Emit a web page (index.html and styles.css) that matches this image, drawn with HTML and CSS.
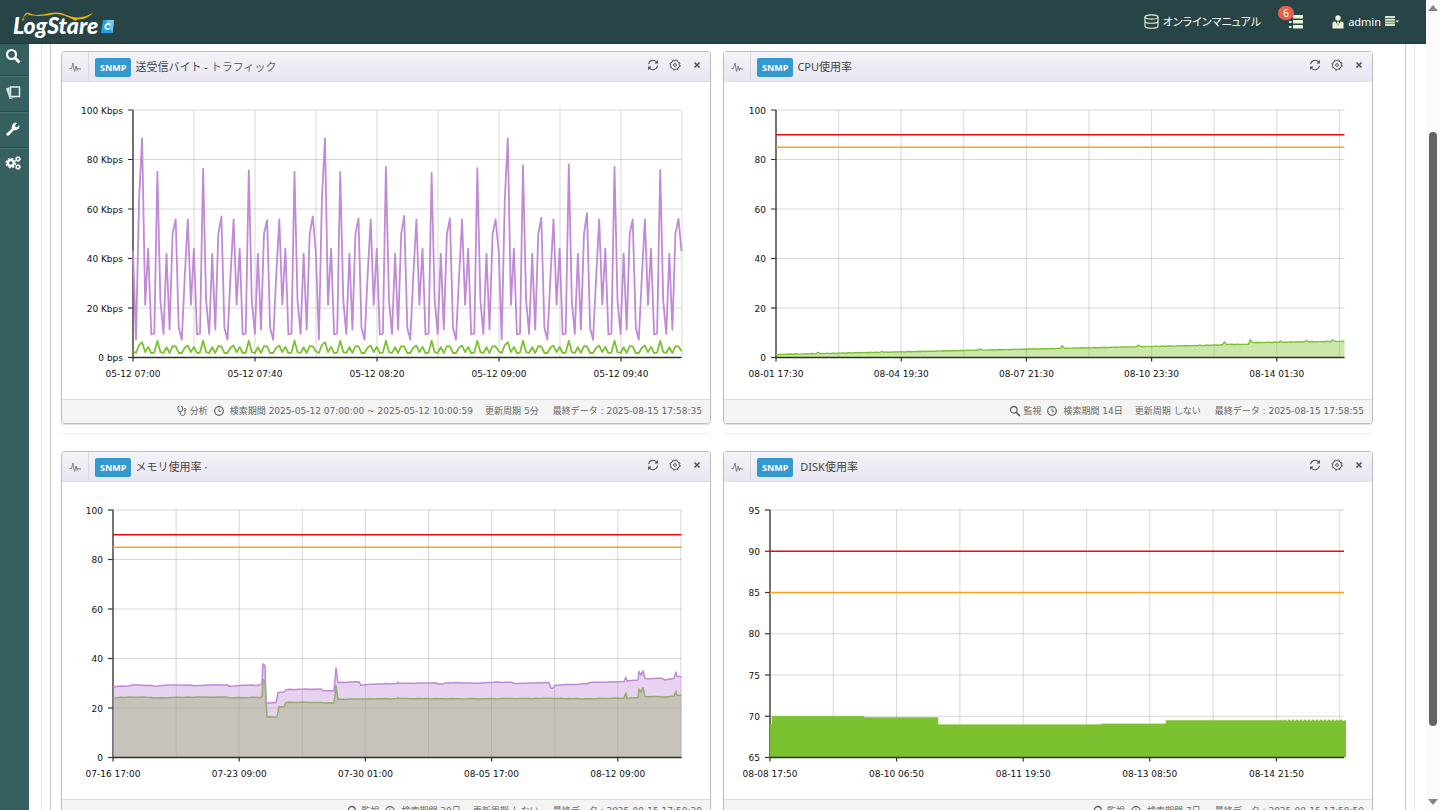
FILE: index.html
```html
<!DOCTYPE html>
<html lang="ja">
<head>
<meta charset="utf-8">
<title>LogStare</title>
<link rel="stylesheet" href="styles.css">
</head>
<body>
<svg class="sprite" aria-hidden="true">
  <symbol id="i-pulse" viewBox="0 0 12 12"><path d="M.5 7.500h2L4 2l1.500 8.500L7.200 5l1 4.500.9-2.500.6 1H12" fill="none" stroke="currentColor" stroke-width=".9"/></symbol>
  <symbol id="i-refresh" viewBox="0 0 12 12"><path d="M1.600 5.200A4.500 4.500 0 0 1 9.600 3M10.400 6.800A4.500 4.500 0 0 1 2.400 9" fill="none" stroke="currentColor" stroke-width="1.100"/><path d="M11 1v3.600H7.400zM1 11V7.400h3.600z" fill="currentColor"/></symbol>
  <symbol id="i-gear" viewBox="0 0 12 12"><circle cx="6" cy="6" r="4.400" fill="none" stroke="currentColor" stroke-width=".9"/><circle cx="6" cy="6" r="5.200" fill="none" stroke="currentColor" stroke-width=".9" stroke-dasharray="2.100 1.980"/><circle cx="6" cy="6" r="1.400" fill="none" stroke="currentColor" stroke-width=".9"/></symbol>
  <symbol id="i-close" viewBox="0 0 12 12"><path d="M3.500 3.500l5 5M8.500 3.500l-5 5" stroke="currentColor" stroke-width="1.600"/></symbol>
  <symbol id="i-clock" viewBox="0 0 12 12"><circle cx="6" cy="6" r="4.300" fill="none" stroke="currentColor" stroke-width="1.200"/><path d="M6 3.500V6.300h2.200" fill="none" stroke="currentColor"/></symbol>
  <symbol id="i-search" viewBox="0 0 12 12"><circle cx="4.800" cy="4.800" r="3.300" fill="none" stroke="currentColor" stroke-width="1.300"/><path d="M7.300 7.300l3.700 3.700" stroke="currentColor" stroke-width="1.700"/></symbol>
  <symbol id="i-steth" viewBox="0 0 12 12"><path d="M3.500 1.500H2v3a2 2 0 0 0 4.400 0v-3H5M4.200 6.600v1.600c0 3 4.800 3 4.800 0V5.500" fill="none" stroke="currentColor" stroke-width="1"/><circle cx="9" cy="4.500" r="1.100" fill="none" stroke="currentColor" stroke-width=".9"/></symbol>
</svg>
<div class="window">
  <div class="page">
    <header class="topbar">
      <a class="logo" href="#" aria-label="LogStare">
        <svg class="cat" viewBox="0 0 76 12" aria-hidden="true"><path d="M1 10C3 3 5 1 8 2c4 2 8 2.500 14 1.500S35 0 42 2.500s10 4 16 4S69 4 73 1.500C69 7 63 8.500 57 8.500L55 10l-3-2C44 4.500 39 2 32 3.500S14 5.500 9 4L6 4.500 4.500 8z" fill="#f2b500"/><path d="M2 7l4-4 3 1-4 2-1 3z" fill="#284447"/></svg>
        <span class="brand">LogStare</span>
        <svg class="edition" viewBox="0 0 13 13" aria-hidden="true"><path d="M2 0h11l-1.500 13H0z" fill="#1ba5e0"/><path d="M5 0h8l-1.500 13z" fill="#79c8ec"/><path d="M9 4.500C6.500 3 4.500 4.500 4.300 6.600S6 9.700 8.500 8.500" fill="none" stroke="#fff" stroke-width="1.800"/></svg>
      </a>
      <nav class="tools">
        <a class="manual" href="#"><svg class="db" viewBox="0 0 15 15" aria-hidden="true"><g fill="none" stroke="#dde9cf" stroke-width="1.200"><ellipse cx="7.500" cy="3" rx="6.500" ry="2.200"/><path d="M1 3v9c0 3 13 3 13 0V3M1 7c0 3 13 3 13 0"/></g></svg>オンラインマニュアル</a>
        <button class="tasks" aria-label="通知 6件"><svg class="list" viewBox="0 0 15 15" aria-hidden="true"><path d="M5 1h10v3.500H5zM5 6h10v3.500H5zM5 11h10v3.500H5z" fill="#eef5d6"/><path d="M1 2h2.500v2H1zM1 7h2.500v2H1zM1 12h2.500v2H1z" fill="#eef5d6"/></svg><span class="badge">6</span></button>
        <button class="user"><svg class="person" viewBox="0 0 12 14" aria-hidden="true"><circle cx="6" cy="3" r="2.700" fill="#eef5d6"/><path d="M.5 13.500V8c0-1.500 2-1.500 3-1.500L6 11l2.500-4.500c1 0 3 0 3 1.500v5.500zM5.300 6.500h1.400L7 8.500l-1 2-1-2z" fill="#eef5d6"/></svg><span>admin</span><svg class="caret" viewBox="0 0 14 11" aria-hidden="true"><path d="M0 0h10v2H0zM0 2.700h10v2H0zM0 5.400h10v2H0zM0 8.100h10v2H0z" fill="#d7e4c8"/><path d="M10.500 4.500H14L12.250 6.500z" fill="#fff"/></svg></button>
      </nav>
    </header>
    <div class="body">
      <nav class="sidebar">
        <button aria-label="検索"><svg viewBox="0 0 16 16" aria-hidden="true"><circle cx="6.500" cy="6.500" r="4.500" fill="none" stroke="#fff" stroke-width="2.200"/><path d="M9.800 9.800l4.700 4.700" stroke="#fff" stroke-width="2.800"/></svg></button>
        <button aria-label="レポート"><svg viewBox="0 0 16 16" aria-hidden="true"><path d="M5.500 2h9v9.500h-9z" fill="none" stroke="#e6f2f0" stroke-width="1.400"/><path d="M4.500 2L1 3.500 4.500 14l6-1.500H4.800z" fill="#d8e8e6"/></svg></button>
        <button aria-label="設定"><svg viewBox="0 0 16 16" aria-hidden="true"><path d="M1.500 12.500L7 7.500C6 4 9 .8 12.300 2L10 4.300l.5 1.700 1.800.3L14.300 4C15 7.500 12 10 9 9l-5 5.300c-1.500 1.200-3.600-.6-2.500-1.800z" fill="#fff"/></svg></button>
        <button aria-label="システム"><svg viewBox="0 0 16 16" aria-hidden="true"><g fill="none" stroke="#fff"><circle cx="5.800" cy="8" r="3" stroke-width="2.400"/><circle cx="5.800" cy="8" r="4.700" stroke-width="1.400" stroke-dasharray="2 1.700"/><circle cx="13" cy="4" r="1.700" stroke-width="1.300"/><circle cx="13" cy="4" r="2.600" stroke-width=".8" stroke-dasharray="1.200 .9"/><circle cx="13" cy="12" r="1.700" stroke-width="1.300"/><circle cx="13" cy="12" r="2.600" stroke-width=".8" stroke-dasharray="1.200 .9"/></g></svg></button>
      </nav>
      <main class="content">
        <div class="outer"><div class="inner">
          <div class="grid" id="grid"></div>
        </div></div>
      </main>
    </div>
  </div>
  <div class="scrollbar" aria-hidden="true"><span class="arrow up"></span><span class="track"><span class="thumb"></span></span><span class="arrow down"></span></div>
</div>
<script src="charts.js"></script>
</body>
</html>
```

FILE: styles.css
```css
* { box-sizing: border-box; }
body { margin: 0; background: #fff; color: #444; font: 10px/14px "DejaVu Sans", "Noto Sans CJK JP", sans-serif; }
button { border: 0; padding: 0; background: none; color: inherit; font: inherit; cursor: pointer; }
a { color: inherit; text-decoration: none; }
.sprite { display: none; }
.window { display: grid; grid-template-columns: 1fr 14px; height: 100vh; overflow: hidden; }
.page { display: flex; flex-direction: column; min-width: 0; overflow: hidden; }

.topbar { display: flex; flex: none; justify-content: space-between; height: 44px; padding: 0 27px 0 13px; background: #284447; border-bottom: 1px solid #1e383b; color: #fff; }
.logo { position: relative; display: flex; gap: 3px; align-items: flex-end; padding-bottom: 8px; }
.brand { font: italic 900 23px/20px Lato, sans-serif; }
.cat { position: absolute; left: 8px; top: 11px; width: 75px; height: 12px; }
.edition { width: 13px; height: 13px; margin-bottom: 2px; }
.tools { display: flex; align-items: center; font: 11px/16px "Noto Sans", "Noto Sans CJK JP", sans-serif; }
.manual { display: flex; align-items: center; gap: 4px; font-feature-settings: "palt"; }
.db { width: 15px; height: 15px; }
.tasks { position: relative; margin-left: 27px; display: flex; }
.list { width: 15px; height: 15px; }
.badge { position: absolute; right: 9px; top: -8px; width: 16px; height: 14px; border-radius: 7px; background: #e8624a; color: #fff; font: 10px/14px "Noto Sans", sans-serif; text-align: center; }
.user { display: flex; align-items: center; gap: 4px; margin-left: 29px; }
.person { width: 12px; height: 14px; }
.caret { width: 14px; height: 11px; }

.body { display: flex; flex: 1; min-height: 0; }
.sidebar { flex: none; width: 29px; background: #365f60; }
.sidebar button { display: flex; align-items: center; width: 29px; height: 36px; padding: 0 0 2px 5px; border-top: 1px solid #4a7475; border-bottom: 1px solid #264a4c; }
.sidebar button:first-child { height: 32px; padding-bottom: 8px; border-top: 0; }
.sidebar button:last-child { border-bottom: 0; padding-bottom: 7px; }
.sidebar svg { width: 16px; height: 16px; }
.content { flex: 1; min-width: 0; padding: 0 11px 0 12px; }
.outer { height: 100%; padding: 0 8px; border: solid #e6e6e6; border-width: 0 1px; }
.inner { height: 100%; padding: 7px 32px 0 10px; border: solid #c8c8c8; border-width: 0 1px; }
.grid { display: grid; grid-template-columns: 1fr 1fr; gap: 17px 12px; }
.slot { min-width: 0; padding-bottom: 9px; border-bottom: 1px solid #ececec; border-radius: 4px; }
.panel { border: 1px solid #bcbcbc; border-radius: 4px; overflow: hidden; box-shadow: 0 1px 1px #ddd; }
.panel-head { display: flex; align-items: center; height: 30px; padding-right: 5px; background: linear-gradient(#f4f3f9, #e8e6f1); border-bottom: 1px solid #dcdce2; }
.panel-mark { display: flex; align-items: center; justify-content: center; width: 27px; height: 29px; border-right: 1px solid #d8d8de; color: #777; }
.panel-mark svg { width: 12px; height: 12px; }
.tag { margin: 2px 4px 0 6px; height: 19px; padding: 0 5px; border-radius: 2px; background: #3399cf; color: #fff; font: bold 9px/19px "Open Sans", sans-serif; }
.panel-title { flex: 1; margin: 0; color: #444; font: 11px/16px "Noto Sans", "Noto Sans CJK JP", sans-serif; white-space: pre; }
.panel-title .sub { color: #666; }
.panel-tools { display: flex; gap: 6px; padding-bottom: 3px; color: #555; }
.panel-tools button { display: flex; align-items: center; justify-content: center; width: 16px; height: 16px; }
.panel-tools svg { width: 12px; height: 12px; }
.chart { display: block; width: 100%; height: auto; font: 9px "DejaVu Sans", sans-serif; fill: #111; }
.panel-foot { display: flex; align-items: center; justify-content: flex-end; height: 24px; padding: 0 8px 1px; background: #f4f4f4; border-top: 1px solid #dedede; color: #666; font-size: 9px; white-space: pre; }
.panel-foot svg { width: 12px; height: 12px; margin-right: 2px; }
.panel-foot span { display: flex; align-items: center; }
.panel-foot .period { margin-left: 5px; }
.panel-foot .period svg { margin-right: 5px; }
.panel-foot .cycle { margin-left: 12px; }
.panel-foot .last { margin-left: 14px; }

.scrollbar { display: flex; flex-direction: column; align-items: center; padding: 5px 0; background: #fbfbfb; }
.arrow { border: 5px solid transparent; }
.up { border-top: 0; border-bottom: 6px solid #858585; }
.down { border-bottom: 0; border-top: 6px solid #858585; }
.track { flex: 1; width: 8px; padding-top: 121px; }
.thumb { display: block; height: 89%; border-radius: 4px; background: #636363; }
```

FILE: charts.js
```js
const PURPLE = '#c08ad6', GREEN = '#7cc230';
const range = (a, b, n) => Array.from({ length: n }, (_, i) => a + (b - a) * i / (n - 1));
const noise = i => Math.sin(i * 2.3) * 0.5 + Math.sin(i * 5.1) * 0.5;

function traffic() {
  const cycle = [75, 23, 9.5, 42, 11.3, 50, 56, 12, 7.2, 33, 55.8, 21.3, 44, 9.3, 9.7];
  const peaks = [75, 76.3, 75.6, 75, 75, 77, 74.6, 76.5, 77.7, 78, 77, 75.8];
  const crest = [55.8, 57, 55.5, 57, 56.2, 57.2, 56.2, 55.8, 56.5, 58.3, 55.8, 56];
  const small = [6.8, 2.2, 1.8, 4.2, 1.8, 4.6, 4.5, 1.8, 1.8, 3.9, 4.8, 2.2, 4.3, 1.8, 2];
  const hour = [43, 7.3, 64, 88.5], hourSmall = [2.5, 1.8, 5, 6.2];
  const up = [], down = [];
  for (let m = 0; m <= 180; m++) {
    const k = (m + 7) % 15, n = Math.floor((m - 8) / 15), h = m % 60;
    let v = k === 0 ? peaks[n] : k === 6 ? crest[n] : cycle[k], s = small[k];
    if (h < 4) { v = hour[h]; s = hourSmall[h]; }
    up.push([m / 180, v]);
    down.push([m / 180, s]);
  }
  return [{ pts: up, color: PURPLE, width: 1.8 }, { pts: down, color: GREEN, width: 1.8 }];
}

function cpu() {
  const bumps = { 42: .5, 106: .4, 205: .6, 286: 1.1, 362: .7, 448: 1.3, 475: 1.2, 505: .4, 530: .5, 556: .6 };
  const pts = range(0, 568, 285).map(x => {
    let v = x < 450 ? 1.2 + x * .0087 : x < 474 ? 5.3 : 6 + (x - 474) * .006;
    return [x / 568, v + noise(x) * .12 + (bumps[x] || bumps[x + 1] || 0)];
  });
  return [{ pts, color: GREEN, width: 1.4, fill: .4 }];
}

function memory() {
  const series = list => list.map(([x, v]) => [(x - 113) / 568.5, v]);
  const wiggle = list => {
    const out = [];
    list.forEach(([x, v], i) => {
      out.push([x, v]);
      const next = list[i + 1];
      if (next && next[0] - x > 9) for (let p = x + 4; p < next[0] - 3; p += 4)
        out.push([p, v + (next[1] - v) * (p - x) / (next[0] - x) + noise(p) * .12]);
    });
    return series(out);
  };
  const top = [[113, 28.7], [129, 28.9], [132, 29.3], [151, 29.2], [154, 28.8], [166, 29.2], [189, 29.3], [194, 29], [208, 29.3], [227, 29.3], [230, 28.8], [240, 29.1], [260, 29.3], [262, 30], [263, 37.8], [265, 37], [266, 22], [276, 22.2], [277, 24], [278, 26.3], [284, 26.5], [286, 27.4], [302, 27.6], [321, 27.7], [323, 27], [334, 27], [336, 36.2], [338, 30.3], [350, 30.5], [359, 30.6], [361, 29.2], [370, 29.6], [397, 29.9], [398, 30.5], [399, 29.9], [436, 30.2], [438, 29.7], [455, 30.3], [476, 30], [494, 30.4], [512, 30.4], [514, 29.9], [549, 30.3], [551, 28], [553, 28], [555, 29.2], [587, 29.8], [590, 30.3], [624, 30.7], [626, 32.5], [627, 30.9], [638, 31.3], [639, 34.8], [641, 33.2], [643, 35], [645, 31.9], [662, 32], [665, 31.3], [674, 32], [676, 34.5], [677, 32.8], [681.5, 32.6]];
  const low = [[113, 24.1], [130, 24.4], [151, 24.3], [154, 24], [189, 24.4], [227, 24.4], [230, 24.1], [260, 24.3], [262, 24.5], [263, 31.5], [265, 31], [267, 16.4], [277, 16.4], [279, 20.6], [284, 20.4], [286, 22.2], [302, 22.3], [321, 22.2], [334, 22], [336, 29], [338, 23.5], [350, 23.6], [397, 23.8], [398, 24.2], [399, 23.8], [476, 23.7], [549, 23.9], [587, 23.7], [624, 24], [626, 26], [627, 23.9], [638, 24.2], [639, 27.8], [641, 26.4], [643, 28.2], [645, 24.7], [665, 24.5], [674, 24.8], [676, 26.8], [677, 25], [681.5, 25]];
  return [{ pts: wiggle(low), color: GREEN, width: 1.5, fill: .4 }, { pts: wiggle(top), color: PURPLE, width: 1.5, fill: .38 }];
}

function disk() {
  const pts = [];
  [[770, 772, 69], [772, 864, 70], [864, 938, 69.85], [938, 1101, 68.97], [1101, 1166, 69.07], [1166, 1285, 69.5]]
    .forEach(([a, b, v]) => pts.push([(a - 770) / 574, v], [(b - 770) / 574, v]));
  for (let x = 1285; x < 1345; x += 2) pts.push([(x - 770) / 574, x % 4 === 1 ? 69.6 : 69.4]);
  pts.push([576 / 574, 69.5]);
  return [{ pts, color: GREEN, width: .6, fill: 1 }];
}

const limits = [[90, '#f80808'], [85, '#ffa01a']];
const panels = [
  { title: '送受信バイト - <span class="sub">トラフィック</span>', icon: 'steth', mode: '分析', period: '検索期間 2025-05-12 07:00:00 ~ 2025-05-12 10:00:59', cycle: '更新周期 5分', last: '2025-08-15 17:58:35',
    x0: 71, x1: 619.5, step: 61, min: 0, max: 100, tick: 20, unit: v => v ? v + ' Kbps' : '0 bps', dates: ['05-12 07:00', '05-12 07:40', '05-12 08:20', '05-12 09:00', '05-12 09:40'], data: traffic(), limits: [] },
  { title: 'CPU使用率', icon: 'search', mode: '監視', period: '検索期間 14日', cycle: '更新周期 しない', last: '2025-08-15 17:58:55',
    x0: 52, x1: 620.5, step: 62.6, min: 0, max: 100, tick: 20, unit: v => v, dates: ['08-01 17:30', '08-04 19:30', '08-07 21:30', '08-10 23:30', '08-14 01:30'], data: cpu(), limits },
  { title: 'メモリ使用率 ·', icon: 'search', mode: '監視', period: '検索期間 30日', cycle: '更新周期 しない', last: '2025-08-15 17:58:20',
    x0: 51, x1: 619.5, step: 63.1, min: 0, max: 100, tick: 20, unit: v => v, dates: ['07-16 17:00', '07-23 09:00', '07-30 01:00', '08-05 17:00', '08-12 09:00'], data: memory(), limits },
  { title: ' DISK使用率', icon: 'search', mode: '監視', period: '検索期間 7日', cycle: '', last: '2025-08-15 17:58:50',
    x0: 46, x1: 620, step: 63.3, min: 65, max: 95, tick: 5, unit: v => v, dates: ['08-08 17:50', '08-10 06:50', '08-11 19:50', '08-13 08:50', '08-14 21:50'], data: disk(), limits }
];

function draw(p) {
  const top = 28, bottom = 275.5;
  const X = t => p.x0 + t * (p.x1 - p.x0);
  const Y = v => bottom - (v - p.min) / (p.max - p.min) * (bottom - top);
  const line = (x1, y1, x2, y2, c, w) => `<line x1="${x1}" y1="${y1}" x2="${x2}" y2="${y2}" stroke="${c}" stroke-width="${w}"/>`;
  let s = '';
  for (let i = 1; p.x0 + i * p.step <= p.x1 + 1; i++) s += line(p.x0 + i * p.step, top, p.x0 + i * p.step, bottom, '#000', 1).replace('/>', ' opacity=".15"/>');
  for (let v = p.min; v <= p.max; v += p.tick) {
    const y = Y(v);
    s += line(p.x0, y, p.x1, y, '#000', 1).replace('/>', ' opacity=".15"/>');
    s += line(p.x0 - 5, y, p.x0, y, '#333', 1.2);
    s += `<text x="${p.x0 - 10}" y="${y + 3.5}" text-anchor="end">${p.unit(v)}</text>`;
  }
  s += line(p.x0, top, p.x0, bottom, '#444', 1.5);
  p.data.forEach(d => {
    const pts = d.pts.map(([t, v]) => X(t).toFixed(1) + ',' + Y(v).toFixed(1)).join(' ');
    const end = X(d.pts[d.pts.length - 1][0]);
    if (d.fill) s += `<polygon points="${p.x0},${bottom} ${pts} ${end},${bottom}" fill="${d.color}" fill-opacity="${d.fill}"/>`;
    s += `<polyline points="${pts}" fill="none" stroke="${d.color}" stroke-width="${d.width}" stroke-linejoin="round"/>`;
  });
  p.limits.forEach(([v, c]) => { s += line(p.x0, Y(v), p.x1, Y(v), c, 1.5); });
  s += line(p.x0, bottom, p.x1, bottom, '#2b3320', 1.3);
  p.dates.forEach((d, i) => {
    const x = p.x0 + i * p.step * 2;
    s += line(x, bottom, x, bottom + 4, '#333', 1.2) + `<text x="${x}" y="295" text-anchor="middle">${d}</text>`;
  });
  return `<svg class="chart" viewBox="0 0 648 317" role="img">${s}</svg>`;
}

const icon = n => `<svg aria-hidden="true"><use href="#i-${n}"/></svg>`;
document.getElementById('grid').innerHTML = panels.map(p => `
<div class="slot"><section class="panel">
<header class="panel-head"><span class="panel-mark">${icon('pulse')}</span><span class="tag">SNMP</span><h2 class="panel-title">${p.title}</h2>
<div class="panel-tools"><button aria-label="更新">${icon('refresh')}</button><button aria-label="設定">${icon('gear')}</button><button aria-label="閉じる">${icon('close')}</button></div></header>
${draw(p)}
<footer class="panel-foot"><span>${icon(p.icon)}${p.mode}</span><span class="period">${icon('clock')}${p.period}</span>${p.cycle ? `<span class="cycle">${p.cycle}</span>` : ''}<span class="last">最終データ : ${p.last}</span></footer>
</section></div>`).join('');
```
